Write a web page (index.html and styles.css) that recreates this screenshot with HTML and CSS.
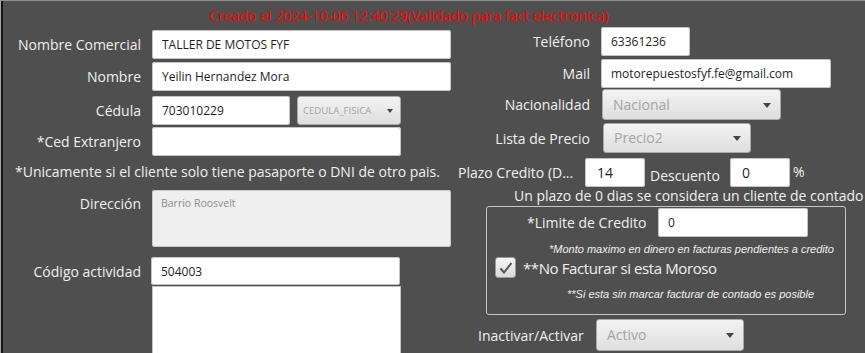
FILE: index.html
```html
<!DOCTYPE html>
<html lang="es">
<head>
    <meta charset="UTF-8">
    <title>Cliente</title>
    <link rel="stylesheet" href="styles.css">
</head>
<body>
    <div class="window">
        <div class="title">Creado el 2024-10-06 12:40:29(Validado para fact electronica)</div>
        <div class="cols">
            <div class="left">
                <div class="row r1">
                    <span class="label">Nombre Comercial</span>
                    <div class="input w299">TALLER DE MOTOS FYF</div>
                </div>
                <div class="row r2">
                    <span class="label">Nombre</span>
                    <div class="input w299">Yeilin Hernandez Mora</div>
                </div>
                <div class="row r3">
                    <span class="label">Cédula</span>
                    <div class="input w138">703010229</div>
                    <div class="select tiny w104"><span>CEDULA_FISICA</span><i class="arrow"></i></div>
                </div>
                <div class="row r4">
                    <span class="label">*Ced Extranjero</span>
                    <div class="input w249"></div>
                </div>
                <div class="note-left">*Unicamente si el cliente solo tiene pasaporte o DNI de otro pais.</div>
                <div class="row r6">
                    <span class="label top">Dirección</span>
                    <div class="textarea">Barrio Roosvelt</div>
                </div>
                <div class="row r7">
                    <span class="label">Código actividad</span>
                    <div class="input w249">504003</div>
                </div>
                <div class="row r8">
                    <span class="label"></span>
                    <div class="listbox"></div>
                </div>
            </div>

            <div class="right">
                <div class="row t1">
                    <span class="label">Teléfono</span>
                    <div class="input w89">63361236</div>
                </div>
                <div class="row t2">
                    <span class="label">Mail</span>
                    <div class="input w230">motorepuestosfyf.fe@gmail.com</div>
                </div>
                <div class="row t3">
                    <span class="label">Nacionalidad</span>
                    <div class="select w179 off1"><span>Nacional</span><i class="arrow"></i></div>
                </div>
                <div class="row t4">
                    <span class="label">Lista de Precio</span>
                    <div class="select w148 off2"><span>Precio2</span><i class="arrow"></i></div>
                </div>
                <div class="plazo">
                    <span class="plazo-label">Plazo Credito (D...</span>
                    <div class="input num">14</div>
                    <span class="desc-label">Descuento</span>
                    <div class="input num">0</div>
                    <span class="pct">%</span>
                </div>
                <div class="note-right">Un plazo de 0 dias se considera un cliente de contado</div>
                <div class="credit-box">
                    <div class="limit">
                        <span class="limit-label">*Limite de Credito</span>
                        <div class="input w150">0</div>
                    </div>
                    <div class="hint hint1">*Monto maximo en dinero en facturas pendientes a credito</div>
                    <div class="check-row">
                        <span class="checkbox">
                            <svg width="14" height="12" viewBox="0 0 14 12"><path d="M1.5 6.5 L5 10.5 L12.5 1" fill="none" stroke="#555" stroke-width="2"/></svg>
                        </span>
                        <span class="check-label">**No Facturar si esta Moroso</span>
                    </div>
                    <div class="hint hint2">**Si esta sin marcar facturar de contado es posible</div>
                </div>
                <div class="estado">
                    <span class="estado-label">Inactivar/Activar</span>
                    <div class="select w148"><span>Activo</span><i class="arrow"></i></div>
                </div>
            </div>
        </div>
    </div>
</body>
</html>
```

FILE: styles.css
```css
body {
    margin: 0;
    background-color: #4f4f4f;
    font-family: "Open Sans", sans-serif;
    color: #f0f0f0;
    overflow: hidden;
}
.window {
    height: 352px;
    border-top: 1px solid #8e8e8e;
    border-left: 1px solid #a8a8a8;
    box-shadow: inset 2px 0 0 #161616;
    overflow: hidden;
}
.title {
    height: 26px;
    line-height: 30px;
    text-align: center;
    color: #ff0000;
    font-size: 14px;
    padding: 0 50px 0 2px;
}
.cols {
    display: flex;
}
.left {
    width: 454px;
    padding-top: 3px;
}
.right {
    flex: 1;
}
.row {
    display: grid;
    grid-template-columns: 140px auto;
    column-gap: 11px;
    align-items: center;
    justify-content: start;
}
.right .row {
    grid-template-columns: 135px auto;
}
.label {
    text-align: right;
    font-size: 14px;
}
.label.top {
    align-self: start;
    padding-top: 4px;
}
.r2 { margin-top: 3px; }
.r3 {
    margin-top: 5px;
    grid-template-columns: 140px auto auto;
}
.r3 .select { margin-left: -4px; }
.r4 { margin-top: 2px; }
.r6 { margin-top: 9px; }
.r7 { margin-top: 10px; }
.r7 .input { margin-left: -1px; height: 28px; }
.r8 { margin-top: 1px; }

.t2 { margin-top: 3px; }
.t3 { margin-top: 1px; }
.t4 { margin-top: 3px; }

.input {
    box-sizing: border-box;
    height: 29px;
    background-color: #fff;
    border-radius: 3px;
    box-shadow: 0 0 0 1px #c4c4c4 inset;
    color: #1e1e1e;
    font-size: 12px;
    line-height: 29px;
    padding: 0 10px;
    white-space: nowrap;
    overflow: hidden;
}
.w299 { width: 299px; }
.w249 { width: 249px; }
.w138 { width: 138px; }
.w89 { width: 89px; }
.w230 { width: 230px; }
.w150 { width: 150px; }

.select {
    box-sizing: border-box;
    position: relative;
    height: 31px;
    border: 1px solid #a9a9a9;
    border-radius: 3px;
    background: linear-gradient(#f3f3f3, #dedede);
    color: #a4a4a4;
    font-size: 14px;
    line-height: 29px;
    padding: 0 10px;
}
.select.tiny {
    height: 29px;
    line-height: 27px;
    font-size: 9.6px;
    padding: 0 5px;
}
.w104 { width: 104px; }
.w179 { width: 179px; }
.w148 { width: 148px; }
.off1 { margin-left: 1px; }
.off2 { margin-left: 2px; height: 30px; line-height: 28px; }
.arrow {
    position: absolute;
    right: 9px;
    top: 50%;
    margin-top: -2px;
    border-left: 4px solid transparent;
    border-right: 4px solid transparent;
    border-top: 5px solid #444;
}
.tiny .arrow {
    right: 7px;
    border-left-width: 3px;
    border-right-width: 3px;
    border-top-width: 4px;
}

.note-left {
    margin-top: 7px;
    padding-left: 14px;
    font-size: 14px;
    line-height: 18px;
}
.textarea {
    box-sizing: border-box;
    width: 299px;
    height: 57px;
    background-color: #efefef;
    border-radius: 3px;
    box-shadow: 0 0 0 1px #c8c8c8 inset;
    color: #8c8c8c;
    font-size: 10.5px;
    padding: 6px 9px;
}
.listbox {
    width: 249px;
    height: 80px;
    background-color: #fff;
    box-shadow: 0 0 0 1px #c4c4c4 inset;
}

.plazo {
    display: flex;
    align-items: center;
    margin-top: 5px;
    padding-left: 3px;
    font-size: 14px;
}
.plazo-label { width: 127px; }
.input.num {
    width: 60px;
    font-size: 14px;
    padding: 0 12px;
}
.desc-label {
    width: 85px;
    padding: 6px 0 0 5px;
    box-sizing: border-box;
}
.pct {
    margin-left: 3px;
    margin-top: -2px;
}
.note-right {
    margin-top: 0;
    padding-left: 59px;
    font-size: 14px;
    line-height: 18px;
    white-space: nowrap;
}
.credit-box {
    box-sizing: border-box;
    width: 360px;
    height: 109px;
    margin: 1px 0 0 31px;
    border: 1px solid #c6c6c6;
    border-radius: 3px;
}
.limit {
    display: flex;
    align-items: center;
    margin-top: 1px;
    padding-left: 40px;
}
.limit-label {
    width: 131px;
    font-size: 14px;
}
.hint {
    font-family: "Liberation Sans", Arial, sans-serif;
    font-style: italic;
    font-size: 11px;
    line-height: 13px;
    color: #f0f0f0;
}
.hint1 {
    margin-top: 6px;
    padding-left: 62px;
}
.check-row {
    display: flex;
    align-items: center;
    margin-top: 1px;
    padding-left: 8px;
}
.checkbox {
    box-sizing: border-box;
    width: 21px;
    height: 21px;
    border: 1px solid #9a9a9a;
    border-radius: 3px;
    background: linear-gradient(#f5f5f5, #dadada);
    display: flex;
    align-items: center;
    justify-content: center;
}
.check-label {
    margin-left: 7px;
    font-size: 15px;
    letter-spacing: -0.4px;
}
.hint2 {
    margin-top: 10px;
    padding-left: 80px;
}
.estado {
    display: flex;
    align-items: center;
    margin-top: 4px;
    padding-left: 23px;
    font-size: 14px;
}
.estado-label { width: 118px; }
.estado .select { height: 32px; line-height: 30px; }
```
